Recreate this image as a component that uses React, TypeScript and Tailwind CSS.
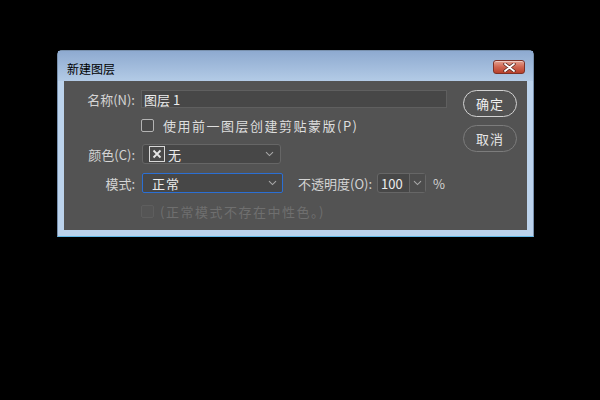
const font = "font-['Noto_Sans_CJK_SC','Noto_Sans',sans-serif]";

function Chevron() {
  return (
    <svg width="9" height="6" viewBox="0 0 9 6" className="shrink-0">
      <path d="M1 1.2 L4.5 4.6 L8 1.2" fill="none" stroke="#a8a8a8" strokeWidth="1.1" />
    </svg>
  );
}

function NoneSwatch() {
  return (
    <svg width="16" height="16" viewBox="0 0 16 16" className="shrink-0">
      <rect x="0.5" y="0.5" width="15" height="15" fill="#4a4a4a" stroke="#d8d8d8" />
      <path d="M4.5 4.5 L11.5 11.5 M11.5 4.5 L4.5 11.5" stroke="#e6e6e6" strokeWidth="1.8" />
    </svg>
  );
}

function CloseButton() {
  return (
    <div className="mt-[9px] mr-[8px] flex h-[14px] w-[32px] items-center justify-center rounded-[3px] border border-[#7d3227] bg-gradient-to-b from-[#e3a08f] via-[#cf6550] to-[#b8402c] shadow-[inset_0_1px_0_rgba(255,255,255,0.45)]">
      <svg width="13" height="9" viewBox="0 0 13 9">
        <path d="M2 1 L11 8 M11 1 L2 8" stroke="#5a2a22" strokeWidth="3.4" strokeLinecap="round" />
        <path d="M2 1 L11 8 M11 1 L2 8" stroke="#ffffff" strokeWidth="1.8" strokeLinecap="round" />
      </svg>
    </div>
  );
}

function Label({ text }: { text: string }) {
  return (
    <div className="w-[71px] shrink-0 text-right text-[13px] leading-none text-[#d4d4d4]">{text}</div>
  );
}

function Checkbox({ disabled }: { disabled?: boolean }) {
  return (
    <div
      className={
        disabled
          ? "h-[13px] w-[13px] shrink-0 rounded-[2px] border border-[#5e5e5e] bg-[#555555]"
          : "h-[13px] w-[13px] shrink-0 rounded-[2px] border border-[#b4b4b4] bg-[#4a4a4a]"
      }
    />
  );
}

export default function App() {
  return (
    <div className={`h-[400px] w-[600px] overflow-hidden bg-black pl-[57px] pt-[50px] ${font}`}>
      <div className="w-[477px] rounded-t-[5px] border border-[#7890ad] border-b-[#63b9e8] bg-[#bcd3ec]">
        {/* title bar */}
        <div className="flex h-[30px] justify-between bg-gradient-to-b from-[#8eaad0] to-[#b3cbe6]">
          <div className="ml-[9px] mt-[12px] text-[12px] leading-none text-black">新建图层</div>
          <CloseButton />
        </div>

        {/* body */}
        <div className="px-[6px] pb-[6px]">
          <div className="flex h-[149px] bg-[#535353]">
            <div className="flex-1">
              {/* name */}
              <div className="mt-[9px] flex h-[18px] items-center">
                <Label text="名称(N):" />
                <div className="ml-[6px] flex h-[18px] w-[306px] items-center border border-[#5f5f5f] bg-[#474747] pl-[2px] text-[13px] leading-none text-[#ececec]">
                  图层 1
                </div>
              </div>

              {/* clipping mask */}
              <div className="mt-[10px] flex h-[14px] items-center pl-[77px]">
                <Checkbox />
                <span className="ml-[9px] text-[13px] leading-none tracking-[1.5px] text-[#dedede]">
                  使用前一图层创建剪贴蒙版(P)
                </span>
              </div>

              {/* color */}
              <div className="mt-[12px] flex h-[20px] items-center">
                <Label text="颜色(C):" />
                <div className="ml-[7px] flex h-[20px] w-[139px] items-center rounded-[3px] border border-[#666666] bg-[#474747] pl-[6px] pr-[6px]">
                  <NoneSwatch />
                  <span className="ml-[3px] flex-1 text-[13px] leading-none text-[#ececec]">无</span>
                  <Chevron />
                </div>
              </div>

              {/* mode + opacity */}
              <div className="mt-[9px] flex h-[20px] items-center">
                <Label text="模式:" />
                <div className="ml-[7px] flex h-[20px] w-[141px] items-center rounded-[2px] border border-[#2b6fd4] bg-[#474747] pl-[9px] pr-[5px]">
                  <span className="flex-1 text-[13px] leading-none tracking-[1px] text-[#ececec]">正常</span>
                  <Chevron />
                </div>
                <span className="ml-[15px] text-[13px] leading-none text-[#d4d4d4]">不透明度(O):</span>
                <div className="ml-[5px] flex h-[20px] w-[49px] rounded-[3px] border border-[#666666] bg-[#474747]">
                  <div className="flex w-[31px] items-center pl-[3px] text-[13px] leading-none text-[#ececec]">100</div>
                  <div className="flex flex-1 items-center justify-center border-l border-[#666666] bg-[#4d4d4d]">
                    <Chevron />
                  </div>
                </div>
                <span className="ml-[7px] text-[13px] leading-none text-[#d4d4d4]">%</span>
              </div>

              {/* neutral colour, disabled */}
              <div className="mt-[12px] flex h-[13px] items-center pl-[77px]">
                <Checkbox disabled />
                <span className="ml-[6px] text-[13px] leading-none tracking-[1.5px] text-[#6f6f6f]">
                  (正常模式不存在中性色。)
                </span>
              </div>
            </div>

            {/* buttons */}
            <div className="mr-[10px] flex w-[54px] flex-col gap-[8px] pt-[9px]">
              <div className="flex h-[27px] items-center justify-center rounded-full border border-[#d2d2d2] text-[13px] leading-none tracking-[1px] text-[#f0f0f0]">
                确定
              </div>
              <div className="flex h-[27px] items-center justify-center rounded-full border border-[#7c7c7c] text-[13px] leading-none tracking-[1px] text-[#e6e6e6]">
                取消
              </div>
            </div>
          </div>
        </div>
      </div>
    </div>
  );
}
